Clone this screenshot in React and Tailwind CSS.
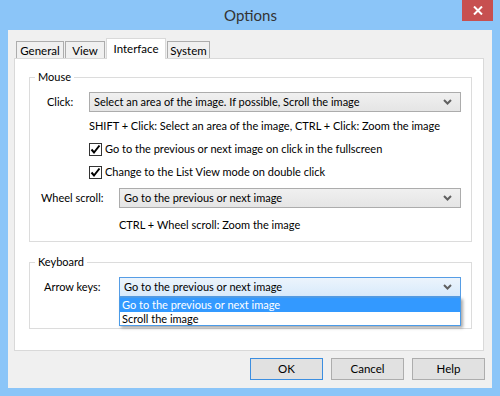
import React from "react";

const font = { fontFamily: 'Lato, "Noto Sans", "Liberation Sans", sans-serif' };

function Chevron() {
  return (
    <svg width="9" height="6" viewBox="0 0 9 6" className="shrink-0">
      <path d="M1 1 L4.5 4.5 L8 1" fill="none" stroke="#606060" strokeWidth="2" />
    </svg>
  );
}

function Combo({ text, active }) {
  return (
    <div
      className={
        "flex-1 min-w-0 h-[20px] border flex items-center justify-between pl-[4px] pr-[8px] " +
        (active
          ? "border-[#569de5] bg-gradient-to-b from-[#ecf4fc] to-[#d8eafb]"
          : "border-[#acacac] bg-gradient-to-b from-[#f0f0f0] to-[#e5e5e5]")
      }
    >
      <span className="leading-[16px] whitespace-nowrap">{text}</span>
      <Chevron />
    </div>
  );
}

function Check({ label }) {
  return (
    <div className="flex items-center h-[16px] pl-[59px]">
      <div className="w-[13px] h-[13px] border border-[#333] bg-white flex items-center justify-center mr-[3px]">
        <svg width="11" height="11" viewBox="0 0 11 11">
          <path d="M1.5 5.5 L4 8.5 L9.5 1.5" fill="none" stroke="#000" strokeWidth="2" />
        </svg>
      </div>
      <span className="leading-[16px] whitespace-nowrap">{label}</span>
    </div>
  );
}

function Tab({ label, selected, w }) {
  if (selected) {
    return (
      <div className={"h-[21px] -mb-[1px] bg-white border border-b-0 border-[#d9d9d9] flex justify-center items-start pt-[2px] relative z-10 " + w}>
        <span className="leading-[16px] text-[11.5px]">{label}</span>
      </div>
    );
  }
  return (
    <div className={"h-[17px] mt-[3px] bg-[#f0f0f0] border border-b-0 border-[#acacac] flex justify-center items-center pt-[1px] " + w}>
      <span className="leading-[16px] text-[11.5px]">{label}</span>
    </div>
  );
}

function Button({ label, def }) {
  return (
    <div
      className={
        "w-[73px] h-[22px] flex items-center justify-center bg-[#e1e1e1] border " +
        (def ? "border-[#3c8ee0]" : "border-[#adadad]")
      }
    >
      <span className="leading-[16px] text-[11.5px]">{label}</span>
    </div>
  );
}

export default function App() {
  return (
    <div
      className="w-[500px] h-[396px] bg-[#8bc5f8] flex flex-col text-[11px] text-black overflow-hidden"
      style={font}
    >
      {/* Title bar */}
      <div className="h-[30px] flex items-start justify-between shrink-0">
        <div className="w-[31px]" />
        <div className="text-[15px] text-[#333] leading-[20px] mt-[5px] ml-[8px]">Options</div>
        <div className="w-[31px] h-[21px] bg-[#c75050] mr-[7px] flex items-center justify-center">
          <svg width="10" height="9" viewBox="0 0 10 9">
            <path d="M1 0.5 L9 8.5 M9 0.5 L1 8.5" stroke="#fff" strokeWidth="2" />
          </svg>
        </div>
      </div>

      {/* Client */}
      <div className="flex-1 mx-[8px] mb-[8px] bg-[#f0f0f0] flex flex-col pl-[6px] pr-[8px] pt-[8px]">
        {/* Tabs */}
        <div className="flex items-start h-[20px] pl-[2px] gap-[1px]">
          <Tab label="General" w="w-[48px]" />
          <Tab label="View" w="w-[40px]" />
          <Tab label="Interface" w="w-[60px]" selected />
          <Tab label="System" w="w-[43px]" />
        </div>

        {/* Tab panel */}
        <div className="h-[293px] bg-white border border-[#d9d9d9] pl-[14px] pr-[11px] pt-[10px]">
          {/* Mouse group */}
          <fieldset className="min-w-0 border border-[#dcdcdc] pb-[8px]">
            <legend className="ml-[5px] px-[3px] leading-[16px]">Mouse</legend>
            <div className="flex flex-col pt-[7px] pr-[10px]">
              <div className="flex items-center">
                <div className="w-[59px] shrink-0 pl-[17px] leading-[16px]">Click:</div>
                <Combo text="Select an area of the image. If possible, Scroll the image" />
              </div>
              <div className="pl-[59px] leading-[16px] mt-[6px] whitespace-nowrap">
                SHIFT + Click: Select an area of the image, CTRL + Click: Zoom the image
              </div>
              <div className="mt-[7px]">
                <Check label="Go to the previous or next image on click in the fullscreen" />
              </div>
              <div className="mt-[7px]">
                <Check label="Change to the List View mode on double click" />
              </div>
              <div className="flex items-center mt-[8px]">
                <div className="w-[89px] shrink-0 pl-[11px] leading-[16px]">Wheel scroll:</div>
                <Combo text="Go to the previous or next image" />
              </div>
              <div className="pl-[89px] leading-[16px] mt-[9px] whitespace-nowrap">
                CTRL + Wheel scroll: Zoom the image
              </div>
            </div>
          </fieldset>

          {/* Keyboard group */}
          <fieldset className="min-w-0 border border-[#dcdcdc] pb-[31px] mt-[12px]">
            <legend className="ml-[5px] px-[3px] leading-[16px]">Keyboard</legend>
            <div className="flex flex-col pt-[7px] pr-[10px]">
              <div className="flex items-center relative">
                <div className="w-[89px] shrink-0 pl-[14px] leading-[16px]">Arrow keys:</div>
                <Combo text="Go to the previous or next image" active />
                {/* Dropdown list */}
                <div className="absolute left-[89px] right-0 top-[20px] bg-white border border-[#4a9be8] shadow-[2px_2px_3px_rgba(0,0,0,0.35)] z-20">
                  <div className="h-[14px] bg-[#3399ff] text-white leading-[14px] pl-[2px] whitespace-nowrap">
                    Go to the previous or next image
                  </div>
                  <div className="h-[13px] leading-[13px] pl-[2px] whitespace-nowrap">Scroll the image</div>
                </div>
              </div>
            </div>
          </fieldset>
        </div>

        {/* Buttons */}
        <div className="flex justify-end gap-[8px] mt-[7px] mr-[-1px]">
          <Button label="OK" def />
          <Button label="Cancel" />
          <Button label="Help" />
        </div>
      </div>
    </div>
  );
}
